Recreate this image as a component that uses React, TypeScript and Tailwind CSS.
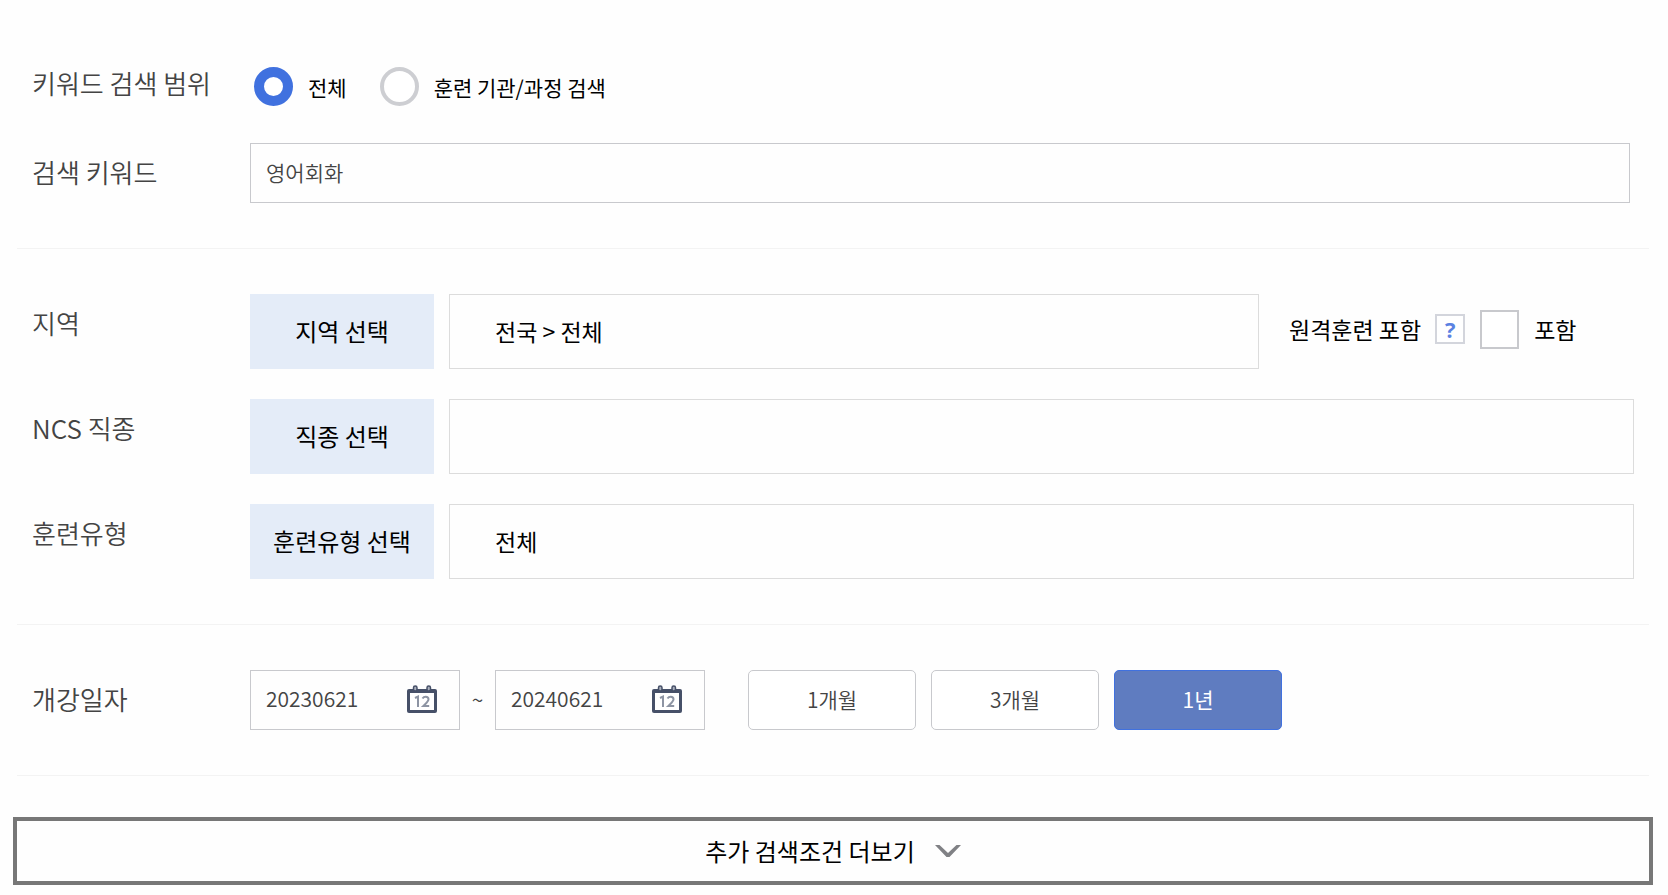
import { useState, type ReactNode } from 'react'
import clsx from 'clsx'

const PERIODS = ['1개월', '3개월', '1년']

interface RowProps {
  label: string
  htmlFor?: string
  children: ReactNode
}

function Row({ label, htmlFor, children }: RowProps) {
  const labelClass = 'w-[234px] shrink-0 pl-[15px] text-[26px] leading-[58px] font-[350] text-[#444]'

  return (
    <div className="flex items-start">
      {htmlFor ? (
        <label htmlFor={htmlFor} className={labelClass}>
          {label}
        </label>
      ) : (
        <div className={labelClass}>{label}</div>
      )}
      <div className="-ml-px flex min-w-0 flex-1 items-start">{children}</div>
    </div>
  )
}

interface ScopeRadioProps {
  label: string
  checked: boolean
  onChange: () => void
}

function ScopeRadio({ label, checked, onChange }: ScopeRadioProps) {
  return (
    <label className="flex items-center gap-[15px] text-[21px] leading-8">
      <input
        type="radio"
        name="scope"
        checked={checked}
        onChange={onChange}
        className="size-[39px] shrink-0 appearance-none rounded-full border-4 border-[#cdced2] bg-white checked:border-10 checked:border-[#4071df]"
      />
      {label}
    </label>
  )
}

interface PickerProps {
  button: string
  value?: string
}

function Picker({ button, value }: PickerProps) {
  return (
    <div className="flex min-w-0 flex-1 gap-[15px]">
      <button type="button" className="h-[75px] w-[184px] shrink-0 bg-[#e4ecf8] pb-0.5 text-[24px]">
        {button}
      </button>
      <div className="flex h-[75px] min-w-0 flex-1 items-center border border-[#dcdcdc] px-[45px] text-[23px]">
        {value}
      </div>
    </div>
  )
}

function CalendarIcon() {
  return (
    <svg width="30" height="28" viewBox="0 0 30 28" fill="none" aria-hidden="true">
      <path d="M0 6a2 2 0 0 1 2-2h26a2 2 0 0 1 2 2v20a2 2 0 0 1-2 2H2a2 2 0 0 1-2-2z" fill="#465068" />
      <path d="M3 8h24v17H3z" fill="#fff" />
      <rect x="6.5" y="1" width="3.5" height="5" rx="1.7" fill="#a9afbc" stroke="#465068" strokeWidth="1.5" />
      <rect x="20" y="1" width="3.5" height="5" rx="1.7" fill="#a9afbc" stroke="#465068" strokeWidth="1.5" />
      <path d="M8 13l3-1.5V22" stroke="#8d94a3" strokeWidth="2" />
      <path d="M15.5 13.5c.8-1.3 2-1.8 3.200-1.800 1.700 0 2.800 1 2.800 2.600 0 2.200-2.500 4-5.300 6.800h6" stroke="#8d94a3" strokeWidth="2" />
    </svg>
  )
}

interface DateFieldProps {
  label: string
  value: string
  onChange: (value: string) => void
}

function DateField({ label, value, onChange }: DateFieldProps) {
  return (
    <div className="flex h-[60px] w-[210px] items-center justify-between border border-[#c8c9cd] pr-[22px] pb-0.5 pl-[15px]">
      <input
        type="text"
        aria-label={label}
        value={value}
        onChange={(e) => onChange(e.target.value)}
        className="w-[120px] text-[21px] font-[350] text-[#444] outline-none"
      />
      <button type="button" aria-label={`${label} 달력`}>
        <CalendarIcon />
      </button>
    </div>
  )
}

export default function App() {
  const [scope, setScope] = useState('all')
  const [keyword, setKeyword] = useState('영어회화')
  const [remote, setRemote] = useState(false)
  const [startDate, setStartDate] = useState('20230621')
  const [endDate, setEndDate] = useState('20240621')
  const [period, setPeriod] = useState('1년')

  return (
    <form
      className="bg-[#fefefe] pt-[54px] pr-[15px] pb-[10px] pl-[13px] font-['Noto_Sans_CJK_KR',sans-serif] text-black"
      onSubmit={(e) => e.preventDefault()}
    >
      <div className="mx-1">
        <section className="flex flex-col gap-6 border-b border-[#f3f3f3] pr-[15px] pb-[45px]">
          <Row label="키워드 검색 범위">
            <div className="ml-1 flex h-[65px] items-center gap-[33px]">
              <ScopeRadio label="전체" checked={scope === 'all'} onChange={() => setScope('all')} />
              <ScopeRadio label="훈련 기관/과정 검색" checked={scope === 'org'} onChange={() => setScope('org')} />
            </div>
          </Row>
          <Row label="검색 키워드" htmlFor="keyword">
            <input
              id="keyword"
              type="text"
              value={keyword}
              onChange={(e) => setKeyword(e.target.value)}
              className="mr-1 h-[60px] min-w-0 flex-1 border border-[#c8c9cd] px-[15px] pb-0.5 text-[21px] font-[350] text-[#444] outline-none"
            />
          </Row>
        </section>

        <section className="flex flex-col gap-[30px] border-b border-[#f3f3f3] py-[45px] pr-[15px]">
          <Row label="지역">
            <Picker button="지역 선택" value="전국 > 전체" />
            <div className="flex h-[70px] w-[375px] shrink-0 items-center pl-[30px] text-[23px]">
              <span>원격훈련 포함</span>
              <button
                type="button"
                aria-label="도움말"
                className="ml-[14px] flex size-[30px] items-center justify-center border-2 border-[#d3d5dc] bg-white font-['Open_Sans',sans-serif] text-[22px] leading-6 font-bold text-[#5b82e2]"
              >
                ?
              </button>
              <label className="ml-[15px] flex items-center gap-[15px]">
                <input
                  type="checkbox"
                  checked={remote}
                  onChange={(e) => setRemote(e.target.checked)}
                  className="size-[39px] appearance-none border-2 border-[#c8c9cd] bg-white checked:bg-[#4071df]"
                />
                포함
              </label>
            </div>
          </Row>
          <Row label="NCS 직종">
            <Picker button="직종 선택" />
          </Row>
          <Row label="훈련유형">
            <Picker button="훈련유형 선택" value="전체" />
          </Row>
        </section>

        <section className="border-b border-[#f3f3f3] py-[45px] pr-[15px]">
          <Row label="개강일자">
            <DateField label="시작일" value={startDate} onChange={setStartDate} />
            <span className="w-[35px] text-center text-[21px] leading-[58px] font-[350] text-[#444]">~</span>
            <DateField label="종료일" value={endDate} onChange={setEndDate} />
            <div className="ml-[43px] flex gap-[15px]">
              {PERIODS.map((p) => (
                <button
                  key={p}
                  type="button"
                  onClick={() => setPeriod(p)}
                  className={clsx(
                    'h-[60px] w-[168px] rounded-[5px] border text-[21px]',
                    period === p
                      ? 'border-[#4071df] bg-[#5f7cc0] text-white'
                      : 'border-[#c8c9cd] bg-white font-[350] text-[#444]'
                  )}
                >
                  {p}
                </button>
              ))}
            </div>
          </Row>
        </section>
      </div>

      <button
        type="button"
        className="mt-[41px] flex h-[68px] w-full items-center justify-center gap-5 border-4 border-[#777] text-[24px]"
      >
        추가 검색조건 더보기
        <svg width="26" height="12" viewBox="0 0 26 12" fill="none" aria-hidden="true">
          <path d="M0 0h4.500l8.500 8L21.500 0H26L14.500 12h-3z" fill="#808185" />
        </svg>
      </button>
    </form>
  )
}
